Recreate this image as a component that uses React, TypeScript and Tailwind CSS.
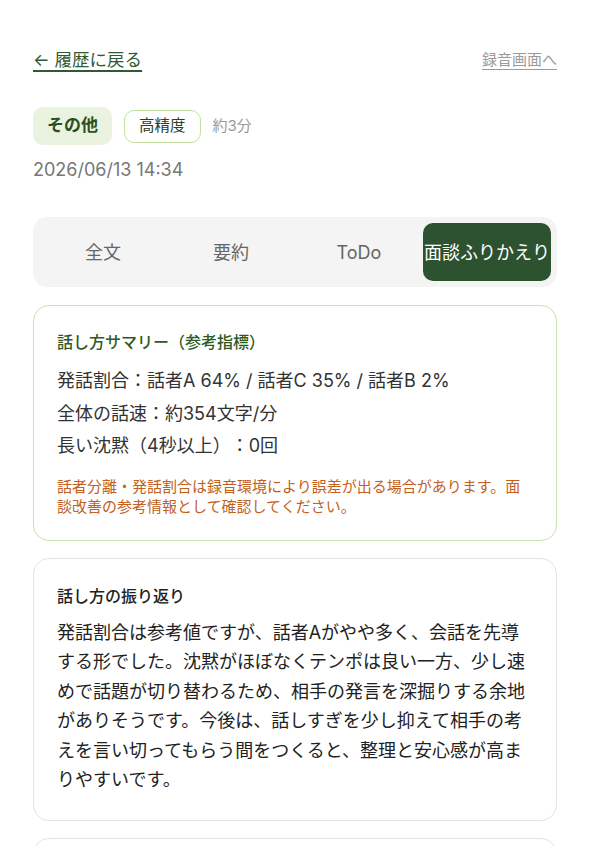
import React, { useState } from 'react';

const tabs = ['全文', '要約', 'ToDo', '面談ふりかえり'];

const App: React.FC = () => {
    const [active, setActive] = useState(3);

    return (
        <div
            className="min-h-screen bg-white px-[33px] pt-[48px] pb-10 text-[#222] [text-spacing-trim:space-all]"
            style={{ fontFamily: 'Inter, "Noto Sans CJK JP", sans-serif' }}
        >
            {/* Header links */}
            <div className="flex items-center justify-between">
                <a href="#" className="text-[17.5px] leading-6 text-[#2f5a34] underline underline-offset-4 decoration-[1.5px]">
                    ← 履歴に戻る
                </a>
                <a href="#" className="text-[15px] leading-6 text-[#9a9a9a] underline underline-offset-4">
                    録音画面へ
                </a>
            </div>

            {/* Badges */}
            <div className="mt-[35px] flex items-center gap-3">
                <span className="flex h-[38px] items-center rounded-[10px] bg-[#e9f3df] px-[14px] text-[17px] font-bold text-[#2d4f1e]">
                    その他
                </span>
                <span className="flex h-[33px] items-center rounded-[10px] border-[1.5px] border-[#c4e0a0] px-[14px] text-[15.5px] text-[#2d4020]">
                    高精度
                </span>
                <span className="text-[15px] text-[#9a9a9a]">約3分</span>
            </div>
            <div className="mt-[13px] text-[18px] leading-6 text-[#777]">2026/06/13 14:34</div>

            {/* Tabs */}
            <div className="mt-[35px] grid h-[70px] grid-cols-4 rounded-[14px] bg-[#f4f4f4] p-[6px]">
                {tabs.map((t, i) => (
                    <button
                        key={t}
                        onClick={() => setActive(i)}
                        className={
                            i === active
                                ? 'rounded-[10px] bg-[#2d5230] text-[18px] whitespace-nowrap text-white'
                                : 'rounded-[10px] text-[18px] whitespace-nowrap text-[#666]'
                        }
                    >
                        {t}
                    </button>
                ))}
            </div>

            {/* Speaking summary */}
            <div className="mt-[18px] rounded-[16px] border-[1.5px] border-[#c9e3a9] px-[23px] pt-[24px] pb-[23px]">
                <h3 className="text-[16px] leading-6 font-medium text-[#2f5a1f]">話し方サマリー（参考指標）</h3>
                <div className="mt-[11px] text-[18px] leading-[32.5px] text-[#333]">
                    <p>発話割合：話者A 64% / 話者C 35% / 話者B 2%</p>
                    <p>全体の話速：約354文字/分</p>
                    <p>長い沈黙（4秒以上）：0回</p>
                </div>
                <p className="mt-[14px] text-[15px] leading-[20px] text-[#c2601c]">
                    話者分離・発話割合は録音環境により誤差が出る場合があります。面談改善の参考情報として確認してください。
                </p>
            </div>

            {/* Reflection */}
            <div className="mt-[17px] rounded-[16px] border-[1.5px] border-[#e4e4e4] px-[23px] pt-[25px] pb-[25px]">
                <h3 className="text-[16px] leading-6 font-medium text-[#222]">話し方の振り返り</h3>
                <p className="mt-[10px] text-[18px] leading-[29.5px] text-[#222]">
                    発話割合は参考値ですが、話者Aがやや多く、会話を先導する形でした。沈黙がほぼなくテンポは良い一方、少し速めで話題が切り替わるため、相手の発言を深掘りする余地がありそうです。今後は、話しすぎを少し抑えて相手の考えを言い切ってもらう間をつくると、整理と安心感が高まりやすいです。
                </p>
            </div>

            <div className="mt-[17px] h-[120px] rounded-[16px] border-[1.5px] border-[#e4e4e4]" />
        </div>
    );
};

export default App;
